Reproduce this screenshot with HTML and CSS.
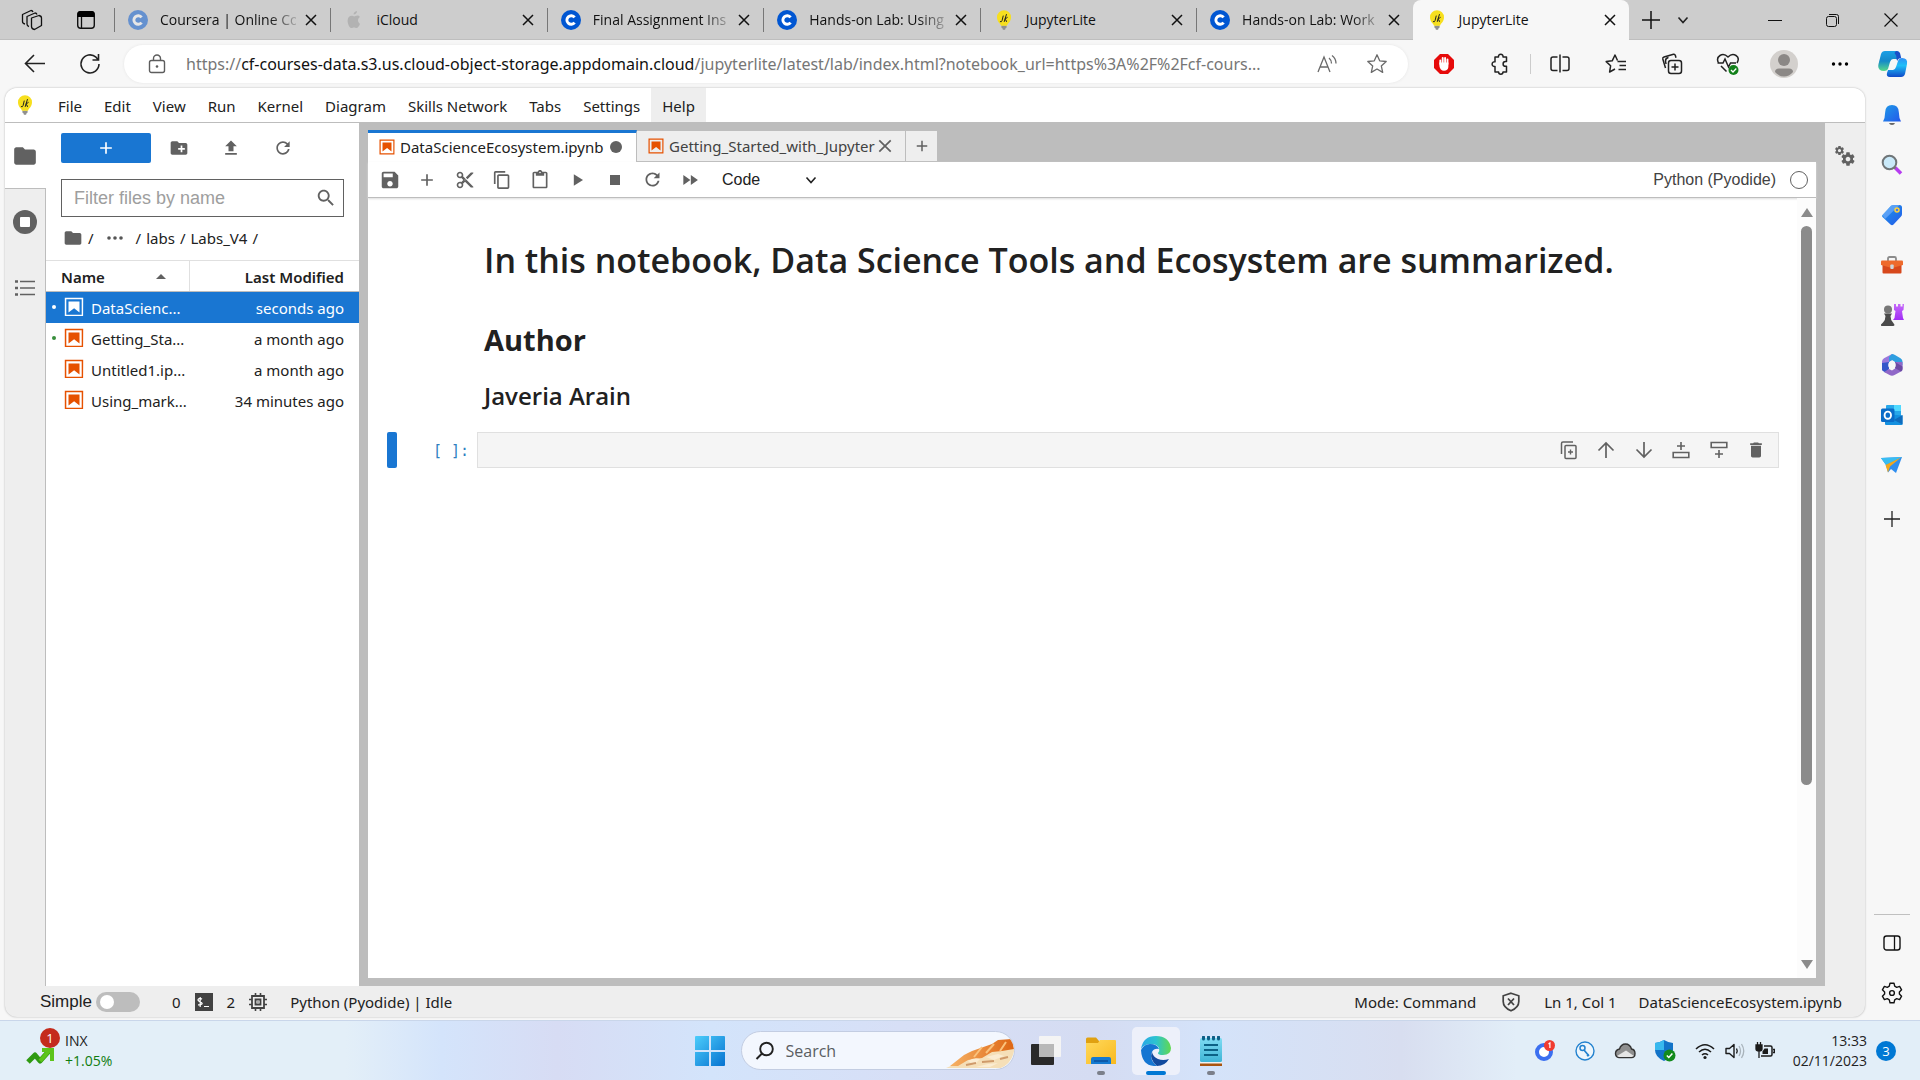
FILE: index.html
```html
<!DOCTYPE html>
<html lang="en">
<head>
<meta charset="utf-8">
<title>JupyterLite</title>
<link rel="stylesheet" href="styles.css">
</head>
<body>
<svg class="defs" aria-hidden="true">
  <defs>
    <linearGradient id="g-blue" x1="0" y1="0" x2="1" y2="1"><stop offset="0" stop-color="#1e9be8"/><stop offset="1" stop-color="#2458ea"/></linearGradient>
    <linearGradient id="g-win" x1="0" y1="0" x2="1" y2="1"><stop offset="0" stop-color="#4ccdfb"/><stop offset="1" stop-color="#0672d0"/></linearGradient>
    <linearGradient id="g-yellow" x1="0" y1="0" x2="1" y2="1"><stop offset="0" stop-color="#ffd95c"/><stop offset="1" stop-color="#f9b91e"/></linearGradient>
    <linearGradient id="g-edge" x1="0" y1="0" x2="1" y2="0"><stop offset="0" stop-color="#2aa6e8"/><stop offset=".5" stop-color="#2cc3d0"/><stop offset="1" stop-color="#62d94e"/></linearGradient>
    <linearGradient id="g-teal" x1="0" y1="0" x2="0" y2="1"><stop offset="0" stop-color="#1aa0e6"/><stop offset=".5" stop-color="#1589c9"/><stop offset="1" stop-color="#57d98a"/></linearGradient>
    <linearGradient id="g-azure" x1="0" y1="0" x2="0" y2="1"><stop offset="0" stop-color="#2f8ff5"/><stop offset=".4" stop-color="#1ec0f8"/><stop offset="1" stop-color="#1049c8"/></linearGradient>
    <linearGradient id="g-purple" x1="0" y1="0" x2="0" y2="1"><stop offset="0" stop-color="#c66bfa"/><stop offset="1" stop-color="#a12df5"/></linearGradient>
    <linearGradient id="g-note" x1="0" y1="0" x2="0" y2="1"><stop offset="0" stop-color="#7fdcf3"/><stop offset="1" stop-color="#3fb4d6"/></linearGradient>
    <linearGradient id="g-crust" x1="0" y1="0" x2="1" y2="0"><stop offset="0" stop-color="#f6b266"/><stop offset="1" stop-color="#dd6513"/></linearGradient>
    <symbol id="i-coursera" viewBox="0 0 20 20"><circle cx="10" cy="10" r="10" fill="#0056d2"/><path d="M13.6 7.4A4.3 4.3 0 1 0 13.6 12.6" fill="none" stroke="#fff" stroke-width="2.9"/></symbol>
    <symbol id="i-bulb" viewBox="0 0 20 20"><path d="M7.4 15.4h5.2v2.2l-1.4 1.2v.9H8.8v-.9l-1.4-1.2z" fill="#8f8f8f"/><path d="M10 .3a7 7 0 0 1 7 7c0 4.500-3 5.700-4 8.500H7C6 13 3 11.800 3 7.300a7 7 0 0 1 7-7z" fill="#f7df1e"/><path d="M9.200 6 8 10.800q-.4 1.500-1.700.9M12.400 4.500 10.300 11.500M13.300 7.500 10.800 9.200q1.300.3 1.700 2.300" fill="none" stroke="#222" stroke-width="1" stroke-linecap="round"/></symbol>
    <symbol id="i-x" viewBox="0 0 14 14"><path d="M2 2l10 10M12 2 2 12" fill="none" stroke="currentColor" stroke-width="1.500"/></symbol>
    <symbol id="i-folder" viewBox="0 0 24 24"><path d="M10 4H4c-1.100 0-1.990.9-1.990 2L2 18c0 1.100.9 2 2 2h16c1.100 0 2-.9 2-2V8c0-1.100-.9-2-2-2h-8l-2-2z" fill="currentColor"/></symbol>
    <symbol id="i-refresh" viewBox="0 0 18 18"><path d="M9 13.500c-2.490 0-4.500-2.010-4.500-4.500S6.510 4.500 9 4.500c1.240 0 2.360.52 3.170 1.330L10 8h5V3l-1.760 1.760C12.150 3.680 10.660 3 9 3 5.690 3 3.010 5.690 3.010 9S5.690 15 9 15c2.970 0 5.430-2.160 5.900-5h-1.520c-.46 2-2.240 3.500-4.380 3.500z" fill="currentColor"/></symbol>
    <symbol id="i-notebook" viewBox="0 0 22 22"><path d="M18.700 3.300v15.400H3.300V3.300h15.400m1.500-1.500H1.800v18.300h18.300l.1-18.300z" fill="currentColor"/><path d="M16.500 16.500l-5.400-4.300-5.600 4.300v-11h11z" fill="currentColor"/></symbol>
    <symbol id="i-add" viewBox="0 0 24 24"><path d="M19 13h-6v6h-2v-6H5v-2h6V5h2v6h6v2z" fill="currentColor"/></symbol>
    <symbol id="i-chev" viewBox="0 0 14 14"><path d="M2.500 4.500 7 9.500l4.500-5" fill="none" stroke="currentColor" stroke-width="1.600"/></symbol>
    <symbol id="i-gear" viewBox="0 0 24 24"><path fill="currentColor" fill-rule="evenodd" d="M19.430 12.980c.04-.32.07-.64.07-.98s-.03-.66-.07-.98l2.110-1.650c.19-.15.24-.42.12-.64l-2-3.460c-.12-.22-.39-.3-.61-.22l-2.490 1c-.52-.4-1.080-.73-1.690-.98l-.38-2.650C14.460 2.180 14.250 2 14 2h-4c-.25 0-.46.18-.49.42l-.38 2.650c-.61.25-1.170.59-1.690.98l-2.490-1c-.23-.09-.49 0-.61.22l-2 3.460c-.13.22-.07.49.12.64l2.110 1.650c-.04.32-.07.65-.07.98s.03.66.07.98l-2.110 1.650c-.19.15-.24.42-.12.64l2 3.460c.12.22.39.3.61.22l2.490-1c.52.4 1.080.73 1.690.98l.38 2.650c.03.24.24.42.49.42h4c.25 0 .46-.18.49-.42l.38-2.650c.61-.25 1.170-.59 1.690-.98l2.490 1c.23.09.49 0 .61-.22l2-3.460c.12-.22.07-.49-.12-.64l-2.110-1.650zM12 15.500c-1.930 0-3.500-1.570-3.500-3.500s1.570-3.500 3.500-3.500 3.500 1.570 3.500 3.500-1.570 3.500-3.500 3.500z"/></symbol>
  </defs>
</svg>

<header class="tabstrip">
  <div class="tab-tools">
    <button aria-label="Workspaces"><svg width="22" height="22" viewBox="0 0 22 22"><g fill="none" stroke="#111" stroke-width="1.300" stroke-linejoin="round"><path d="M10.500 9 18 6.500q2.500.5 2.500 2.500v7.500l-7 4q-3-.5-3-3z"/><path d="M8 17.500q-2-.5-2-2.500V7.500L14 4q1.500 0 2 1.500"/><path d="M4 15q-2.500-.5-2.500-2.500V5.500L10 1.500q1.500 0 2 1.500"/></g></svg></button>
    <button aria-label="Tab actions"><svg width="20" height="20" viewBox="0 0 20 20"><rect x="1.700" y="1.700" width="16.600" height="16.600" rx="3" fill="none" stroke="#111" stroke-width="1.400"/><path d="M1.500 7V4q0-3 3-3h11q3 0 3 3v3z" fill="#000"/><path d="M5.500 7v11" stroke="#111" stroke-width="1.300"/></svg></button>
  </div>
  <nav class="tabs" aria-label="Browser tabs">
    <div class="tab asleep"><svg class="fav"><use href="#i-coursera"/></svg><a href="#" class="fade">Coursera | Online Co</a><button aria-label="Close tab"><svg class="x"><use href="#i-x"/></svg></button></div>
    <div class="tab"><svg class="fav" viewBox="0 0 20 20"><path d="M13 1c.1 2-1.600 3.600-3.400 3.600C9.500 2.700 11 1.200 13 1zM16 13.800c-.9 2.400-2.200 4.300-3.600 4.300-1 0-1.300-.6-2.400-.6s-1.500.6-2.400.6C5.600 18 3.600 14 3.600 10.700c0-3.200 2-5 4-5 1.100 0 1.900.7 2.600.7.700 0 1.700-.8 3.100-.8 1 0 2 .5 2.600 1.400-2.700 1.600-2.300 5.400.1 6.800z" fill="#b2b2b2"/></svg><a href="#">iCloud</a><button aria-label="Close tab"><svg class="x"><use href="#i-x"/></svg></button></div>
    <div class="tab"><svg class="fav"><use href="#i-coursera"/></svg><a href="#" class="fade">Final Assignment Ins</a><button aria-label="Close tab"><svg class="x"><use href="#i-x"/></svg></button></div>
    <div class="tab"><svg class="fav"><use href="#i-coursera"/></svg><a href="#" class="fade">Hands-on Lab: Using</a><button aria-label="Close tab"><svg class="x"><use href="#i-x"/></svg></button></div>
    <div class="tab"><svg class="fav"><use href="#i-bulb"/></svg><a href="#">JupyterLite</a><button aria-label="Close tab"><svg class="x"><use href="#i-x"/></svg></button></div>
    <div class="tab"><svg class="fav"><use href="#i-coursera"/></svg><a href="#" class="fade">Hands-on Lab: Work</a><button aria-label="Close tab"><svg class="x"><use href="#i-x"/></svg></button></div>
    <div class="tab active"><svg class="fav"><use href="#i-bulb"/></svg><a href="#">JupyterLite</a><button aria-label="Close tab"><svg class="x"><use href="#i-x"/></svg></button></div>
  </nav>
  <div class="new-tab">
    <button aria-label="New tab"><svg width="18" height="18" viewBox="0 0 18 18"><path d="M9 0v18M0 9h18" stroke="#111" stroke-width="1.500"/></svg></button>
    <button aria-label="Tab list"><svg width="14" height="14"><use href="#i-chev"/></svg></button>
  </div>
  <div class="win-controls">
    <button aria-label="Minimize"><svg width="14" height="14" viewBox="0 0 14 14"><path d="M0 7.500h14" stroke="#111"/></svg></button>
    <button aria-label="Restore"><svg width="14" height="14" viewBox="0 0 14 14"><path d="M3 1.500h7.500q2 0 2 2V11" fill="none" stroke="#111"/><rect x=".5" y="3.500" width="10" height="10" rx="2" fill="none" stroke="#111"/></svg></button>
    <button aria-label="Close window"><svg width="14" height="14" viewBox="0 0 14 14"><path d="M.5.500l13 13M13.500.500l-13 13" stroke="#111" stroke-width="1.200"/></svg></button>
  </div>
</header>

<div class="toolbar">
  <button class="nav-btn" aria-label="Back"><svg width="22" height="20" viewBox="0 0 22 20"><path d="M10 1 1.500 9.500 10 18M1.500 9.500H21" fill="none" stroke="#222" stroke-width="1.600"/></svg></button>
  <button class="nav-btn" aria-label="Refresh"><svg width="22" height="22" viewBox="0 0 22 22"><path d="M20 11a9 9 0 1 1-3-6.800L19 6.500M19.500 1v6h-6" fill="none" stroke="#222" stroke-width="1.600"/></svg></button>
  <div class="address">
    <svg class="lock" width="18" height="20" viewBox="0 0 18 20"><rect x="1.500" y="6.500" width="15" height="12" rx="2" fill="none" stroke="#5d5d5d" stroke-width="1.400"/><path d="M5.500 6.500V4.500a3.500 3.500 0 0 1 7 0v2" fill="none" stroke="#5d5d5d" stroke-width="1.400"/><circle cx="9" cy="12.500" r="1.300" fill="#5d5d5d"/></svg>
    <div class="url" role="textbox" contenteditable="true" spellcheck="false" aria-label="Address"><span>https://</span>cf-courses-data.s3.us.cloud-object-storage.appdomain.cloud<span>/jupyterlite/latest/lab/index.html?notebook_url=https%3A%2F%2Fcf-cours...</span></div>
    <button class="aloud" aria-label="Read aloud"><svg width="22" height="20" viewBox="0 0 22 20"><path d="M2 18 8 3l6 15M4.200 13h7.600M13 4q2.500 2 2.500 5.500M16 1.500q4 3 4 8" fill="none" stroke="#6a6a6a" stroke-width="1.300"/></svg></button>
    <button aria-label="Add to favorites"><svg width="22" height="22" viewBox="0 0 22 22"><path d="M11 1.800l2.700 6 6.500.7-4.900 4.400 1.400 6.500L11 16l-5.700 3.400 1.400-6.500L1.800 8.500l6.500-.7z" fill="none" stroke="#6a6a6a" stroke-width="1.300" stroke-linejoin="round"/></svg></button>
  </div>
  <div class="extensions">
    <button aria-label="Ad blocker"><svg width="20" height="20" viewBox="0 0 20 20"><path d="M6 0h8l6 6v8l-6 6H6l-6-6V6z" fill="#e60a0a"/><path d="M6.300 10V6.500M8.700 9V4M11.100 9V4M13.500 10V5.500" stroke="#fff" stroke-width="1.900" stroke-linecap="round"/><path d="M5.400 8.500h9V13q-.5 3.800-4.400 3.800T5.400 12z" fill="#fff"/></svg></button>
    <button aria-label="Extensions"><svg width="22" height="22" viewBox="0 0 22 22"><path d="M6 4h3.500a2.300 2.300 0 1 1 4.500 0h3.500v4.500h-1a2.300 2.300 0 0 0 0 4.800h1V19H14a2.200 2.200 0 0 1-4.400 0H6v-5.500a2.400 2.400 0 1 1 0-4.700z" fill="none" stroke="#222" stroke-width="1.500" stroke-linejoin="round"/></svg></button>
    <i class="divider"></i>
    <button aria-label="Split screen"><svg width="22" height="22" viewBox="0 0 22 22"><path d="M8.500 4H4Q2 4 2 6v9.500q0 2 2 2h4.500M13.500 4H18q2 0 2 2v9.500q0 2-2 2h-4.500M11 1.500v18" fill="none" stroke="#222" stroke-width="1.500"/></svg></button>
    <button aria-label="Favorites"><svg width="22" height="22" viewBox="0 0 22 22"><path d="M12.500 7.500 10 2 7.200 7.800l-6 .8 4.400 4.200-1 6.200 5.400-3M12.500 8.500H21M14.500 12.500H21M13.500 16.500H21" fill="none" stroke="#222" stroke-width="1.500" stroke-linejoin="round"/></svg></button>
    <button aria-label="Collections"><svg width="22" height="22" viewBox="0 0 22 22"><rect x="7.500" y="7.500" width="13" height="13" rx="2.500" fill="none" stroke="#222" stroke-width="1.500"/><path d="M14 10.500v7M10.500 14h7M4.500 15 1.800 6Q1.500 4.500 3 4l9.500-2.700q1.300-.3 1.800 1l.7 2.400M5 11l-.5-3q0-3 3-3.500" fill="none" stroke="#222" stroke-width="1.500"/></svg></button>
    <button aria-label="Browser essentials"><svg width="24" height="24" viewBox="0 0 24 24"><path d="M2.500 11Q0 6 4 3.500t8 1.500q4-4 8-1.500T21 11M1.500 11H7l2-4 3.500 8 2-4H20M5 14l5.500 5.500" fill="none" stroke="#222" stroke-width="1.500"/><circle cx="17.500" cy="18" r="5" fill="#12801a"/><path d="M15 18l2 2 3.300-3.500" fill="none" stroke="#fff" stroke-width="1.300"/></svg></button>
    <button aria-label="Profile"><svg width="28" height="28" viewBox="0 0 28 28"><circle cx="14" cy="14" r="14" fill="#d3d0cd"/><circle cx="14" cy="10" r="6" fill="#8b8886"/><path d="M5 22q0-3.500 4-3.500h10q4 0 4 3.500-4 4.500-9 4.500T5 22z" fill="#8b8886"/></svg></button>
    <button aria-label="Settings and more"><svg width="18" height="6" viewBox="0 0 18 6"><circle cx="2.500" cy="3" r="1.700"/><circle cx="9" cy="3" r="1.700"/><circle cx="15.500" cy="3" r="1.700"/></svg></button>
  </div>
  <button class="copilot" aria-label="Copilot"><svg width="30" height="28" viewBox="0 0 30 28"><path d="M7 1h11q4 0 3.500 4L20 9h-5q-2 0-3 3l-2 7q-1 2-4 2Q-1 21 .500 14L3 4q1-3 4-3z" fill="url(#g-teal)"/><path d="M23 27H12q-4 0-3-4l1-3h5q2 0 3-3l2-6q1-3 4-3 6 0 5 6L27 24q-1 3-4 3z" fill="url(#g-azure)"/><path d="M18 1q4 0 4.500 4l.7 3q-3 0-4 3l-.7-2q0-4-2-6z" fill="#1b50c8"/></svg></button>
</div>

<div class="middle">
  <main class="page">
    <nav class="menubar" aria-label="Main menu">
      <svg class="logo" width="20" height="22"><use href="#i-bulb"/></svg>
      <button>File</button><button>Edit</button><button>View</button><button>Run</button><button>Kernel</button><button>Diagram</button><button>Skills Network</button><button>Tabs</button><button>Settings</button><button class="hover">Help</button>
    </nav>
    <div class="lab">
      <nav class="rail left" aria-label="Side panels">
        <button class="current" aria-label="File Browser"><svg width="26" height="26"><use href="#i-folder"/></svg></button>
        <button aria-label="Running Terminals and Kernels"><svg width="24" height="24" viewBox="0 0 24 24"><circle cx="12" cy="12" r="12" fill="currentColor"/><rect x="7" y="7" width="10" height="10" rx="1" fill="#fff"/></svg></button>
        <button aria-label="Table of Contents"><svg width="20" height="16" viewBox="0 0 20 16"><path d="M5 1.500h15M5 8h15M5 14.500h15" stroke="currentColor" stroke-width="1.600"/><path d="M0 1.500h3M0 8h3M0 14.500h3" stroke="currentColor" stroke-width="2.600"/></svg></button>
      </nav>

      <section class="files" aria-label="File browser">
        <div class="file-actions">
          <button class="launcher" aria-label="New Launcher"><svg width="20" height="20"><use href="#i-add"/></svg></button>
          <button aria-label="New Folder"><svg width="20" height="20" viewBox="0 0 24 24"><path fill="currentColor" d="M20 6h-8l-2-2H4c-1.110 0-1.990.89-1.990 2L2 18c0 1.110.89 2 2 2h16c1.110 0 2-.89 2-2V8c0-1.110-.89-2-2-2zm-1 8h-3v3h-2v-3h-3v-2h3V9h2v3h3v2z"/></svg></button>
          <button aria-label="Upload Files"><svg width="20" height="20" viewBox="0 0 24 24"><path fill="currentColor" d="M9 16h6v-6h4l-7-7-7 7h4zm-4 2h14v2H5z"/></svg></button>
          <button aria-label="Refresh File List"><svg width="20" height="20"><use href="#i-refresh"/></svg></button>
        </div>
        <label class="filter"><input type="text" placeholder="Filter files by name" aria-label="Filter files by name"><svg width="22" height="22" viewBox="0 0 24 24"><path fill="currentColor" d="M15.500 14h-.79l-.28-.27C15.410 12.590 16 11.110 16 9.500 16 5.910 13.090 3 9.500 3S3 5.910 3 9.500 5.910 16 9.500 16c1.610 0 3.090-.59 4.230-1.570l.27.28v.79l5 4.990L20.490 19l-4.990-5zm-6 0C7.010 14 5 11.990 5 9.500S7.010 5 9.500 5 14 7.010 14 9.500 11.990 14 9.500 14z"/></svg></label>
        <nav class="crumbs" aria-label="Path"><a href="#" aria-label="Root"><svg width="20" height="20"><use href="#i-folder"/></svg></a><span>/</span><a href="#" class="dots" aria-label="Hidden folders"><svg width="16" height="4" viewBox="0 0 16 4"><circle cx="2" cy="2" r="1.800" fill="#555"/><circle cx="8" cy="2" r="1.800" fill="#555"/><circle cx="14" cy="2" r="1.800" fill="#555"/></svg></a><span>/</span><a href="#">labs</a><span>/</span><a href="#">Labs_V4</a><span>/</span></nav>
        <table class="listing">
          <thead><tr><th scope="col"><div class="sort">Name<svg width="10" height="5" viewBox="0 0 10 5"><path d="M0 5l5-5 5 5z" fill="#616161"/></svg></div></th><th scope="col">Last Modified</th></tr></thead>
          <tbody>
            <tr class="selected"><td><div class="file running"><svg width="22" height="22"><use href="#i-notebook"/></svg><a href="#">DataScienc...</a></div></td><td>seconds ago</td></tr>
            <tr><td><div class="file running"><svg width="22" height="22"><use href="#i-notebook"/></svg><a href="#">Getting_Sta...</a></div></td><td>a month ago</td></tr>
            <tr><td><div class="file"><svg width="22" height="22"><use href="#i-notebook"/></svg><a href="#">Untitled1.ip...</a></div></td><td>a month ago</td></tr>
            <tr><td><div class="file"><svg width="22" height="22"><use href="#i-notebook"/></svg><a href="#">Using_mark...</a></div></td><td>34 minutes ago</td></tr>
          </tbody>
        </table>
      </section>

      <section class="dock">
        <div class="doc-tabs">
          <div class="doc-tab current"><svg width="18" height="18"><use href="#i-notebook"/></svg><a href="#">DataScienceEcosystem.ipynb</a><i class="dirty"></i></div>
          <div class="doc-tab"><svg width="18" height="18"><use href="#i-notebook"/></svg><a href="#">Getting_Started_with_Jupyter</a><button aria-label="Close"><svg width="16" height="16"><use href="#i-x"/></svg></button></div>
          <button class="doc-add" aria-label="New Launcher"><svg width="18" height="18"><use href="#i-add"/></svg></button>
        </div>
        <div class="notebook">
          <div class="nb-toolbar">
            <div class="nb-actions">
              <button aria-label="Save"><svg width="22" height="22" viewBox="0 0 24 24"><path fill="currentColor" d="M17 3H5c-1.110 0-2 .9-2 2v14c0 1.100.89 2 2 2h14c1.100 0 2-.9 2-2V7l-4-4zm-5 16c-1.660 0-3-1.340-3-3s1.340-3 3-3 3 1.340 3 3-1.340 3-3 3zm3-10H5V5h10v4z"/></svg></button>
              <button aria-label="Insert cell"><svg width="20" height="20"><use href="#i-add"/></svg></button>
              <button aria-label="Cut"><svg width="20" height="20" viewBox="0 0 24 24"><path fill="currentColor" d="M9.640 7.640c.23-.5.36-1.050.36-1.640 0-2.210-1.790-4-4-4S2 3.790 2 6s1.790 4 4 4c.59 0 1.140-.13 1.640-.36L10 12l-2.360 2.360C7.140 14.130 6.590 14 6 14c-2.210 0-4 1.790-4 4s1.790 4 4 4 4-1.790 4-4c0-.59-.13-1.140-.36-1.640L12 14l7 7h3v-1L9.640 7.640zM6 8c-1.100 0-2-.89-2-2s.9-2 2-2 2 .89 2 2-.9 2-2 2zm0 12c-1.100 0-2-.89-2-2s.9-2 2-2 2 .89 2 2-.9 2-2 2zm6-7.500c-.28 0-.5-.22-.5-.5s.22-.5.5-.5.5.22.5.5-.22.5-.5.5zM19 3l-6 6 2 2 7-7V3z"/></svg></button>
              <button aria-label="Copy"><svg width="20" height="20" viewBox="0 0 18 18"><path fill="currentColor" d="M11.900 1H3.200C2.400 1 1.700 1.700 1.700 2.500v10.200h1.500V2.500h8.700V1zM14.100 3.900h-8c-.8 0-1.500.7-1.500 1.500v10.200c0 .8.7 1.500 1.500 1.500h8c.8 0 1.500-.7 1.500-1.500V5.400c-.1-.8-.7-1.500-1.500-1.500zM14.100 15.500h-8V5.400h8v10.100z"/></svg></button>
              <button aria-label="Paste"><svg width="20" height="20" viewBox="0 0 24 24"><path fill="currentColor" d="M19 2h-4.180C14.400.84 13.300 0 12 0c-1.300 0-2.400.84-2.820 2H5c-1.100 0-2 .9-2 2v16c0 1.100.9 2 2 2h14c1.100 0 2-.9 2-2V4c0-1.100-.9-2-2-2zm-7 0c.55 0 1 .45 1 1s-.45 1-1 1-1-.45-1-1 .45-1 1-1zm7 18H5V4h2v3h10V4h2v16z"/></svg></button>
              <button aria-label="Run"><svg width="20" height="20" viewBox="0 0 24 24"><path fill="currentColor" d="M7 5v14l11-7z"/></svg></button>
              <button aria-label="Interrupt"><svg width="20" height="20" viewBox="0 0 24 24"><path fill="currentColor" d="M6 6h12v12H6z"/></svg></button>
              <button aria-label="Restart"><svg width="21" height="21"><use href="#i-refresh"/></svg></button>
              <button aria-label="Restart and run all"><svg width="20" height="20" viewBox="0 0 24 24"><path fill="currentColor" d="M4 18l8.500-6L4 6v12zm9-12v12l8.500-6L13 6z"/></svg></button>
            </div>
            <label class="cell-type"><select aria-label="Cell type"><option>Code</option><option>Markdown</option><option>Raw</option></select><svg width="14" height="14"><use href="#i-chev"/></svg></label>
            <button class="kernel">Python (Pyodide)</button>
            <i class="kernel-status"></i>
          </div>
          <div class="nb-body">
            <div class="cells">
              <article class="markdown">
                <h1>In this notebook, Data Science Tools and Ecosystem are summarized.</h1>
                <h2>Author</h2>
                <h3>Javeria Arain</h3>
              </article>
              <div class="cell">
                <i class="collapser"></i>
                <span class="prompt">[ ]:</span>
                <div class="editor">
                  <textarea rows="1" aria-label="Code cell"></textarea>
                  <div class="cell-tools">
                    <button aria-label="Duplicate cell"><svg width="20" height="20" viewBox="0 0 20 20"><path d="M2.500 14V3.500q0-1.500 1.500-1.500h10" fill="none" stroke="currentColor" stroke-width="1.500"/><rect x="6" y="5.500" width="11" height="13" rx="1" fill="none" stroke="currentColor" stroke-width="1.500"/><path d="M11.500 9.500v5M9 12h5" stroke="currentColor" stroke-width="1.400"/></svg></button>
                    <button aria-label="Move up"><svg width="18" height="18" viewBox="0 0 18 18"><path d="M9 17V2M1.500 9.500 9 2l7.500 7.500" fill="none" stroke="currentColor" stroke-width="1.700"/></svg></button>
                    <button aria-label="Move down"><svg width="18" height="18" viewBox="0 0 18 18"><path d="M9 1v15M1.500 8.500 9 16l7.500-7.500" fill="none" stroke="currentColor" stroke-width="1.700"/></svg></button>
                    <button aria-label="Insert above"><svg width="18" height="18" viewBox="0 0 18 18"><path d="M9 1v8M5 5h8M1.200 11.500h15.600v5H1.200z" fill="none" stroke="currentColor" stroke-width="1.600"/></svg></button>
                    <button aria-label="Insert below"><svg width="18" height="18" viewBox="0 0 18 18"><path d="M9 9v8M5 13h8M1.200 1.500h15.600v5H1.200z" fill="none" stroke="currentColor" stroke-width="1.600"/></svg></button>
                    <button aria-label="Delete cell"><svg width="20" height="20" viewBox="0 0 24 24"><path fill="currentColor" d="M6 19c0 1.100.9 2 2 2h8c1.100 0 2-.9 2-2V7H6v12zM19 4h-3.500l-1-1h-5l-1 1H5v2h14V4z"/></svg></button>
                  </div>
                </div>
              </div>
            </div>
            <div class="scrollbar" aria-hidden="true"><i class="up"></i><div class="track"><i class="thumb"></i></div><i class="down"></i></div>
          </div>
        </div>
      </section>

      <nav class="rail right" aria-label="Inspector">
        <button aria-label="Property Inspector"><svg width="22" height="22" viewBox="0 0 22 22"><svg x="0" y="0" width="11" height="11"><use href="#i-gear"/></svg><svg x="6" y="6" width="16" height="16"><use href="#i-gear"/></svg></svg></button>
      </nav>
    </div>
    <footer class="status">
      <label class="simple">Simple<input type="checkbox" role="switch"></label>
      <div class="counts"><span>0</span><svg width="18" height="18" viewBox="0 0 18 18"><rect width="18" height="18" fill="#424242"/><path d="M7 6.200Q5 4.600 3.500 6t1.500 2.800 1.800 2.300T3 11.800M5.200 4v10M9 13.500h5" fill="none" stroke="#fff" stroke-width="1.200"/></svg><span>2</span><svg width="18" height="18" viewBox="0 0 18 18"><path d="M3 3h12v12H3zM6.500 6.500h5v5h-5z" fill="none" stroke="#424242" stroke-width="1.800"/><path d="M6.500 0v3M11.500 0v3M6.500 15v3M11.500 15v3M0 6.500h3M0 11.500h3M15 6.500h3M15 11.500h3M8.500 9h1" stroke="#424242" stroke-width="1.600"/></svg></div>
      <span>Python (Pyodide) | Idle</span>
      <span class="mode">Mode: Command</span>
      <svg class="shield" width="20" height="20" viewBox="0 0 20 20"><path d="M10 1.200l7.800 2.600v5.700q0 6-7.800 9.300Q2.200 15.500 2.200 9.500V3.800z" fill="none" stroke="#424242" stroke-width="1.700"/><path d="M7 6.500l6 6.500M13 6.500 7 13" stroke="#424242" stroke-width="1.800"/></svg>
      <span class="pos">Ln 1, Col 1</span>
      <span>DataScienceEcosystem.ipynb</span>
    </footer>
  </main>

  <aside class="sidebar" aria-label="Edge sidebar">
    <button aria-label="Notifications"><svg width="22" height="22" viewBox="0 0 22 22"><path d="M8 19h6q-.5 2-3 2t-3-2z" fill="#666"/><path d="M11 1q6.500 0 6.800 7l.7 6 1.500 3.500H2L3.500 14l.7-6Q4.500 1 11 1z" fill="url(#g-blue)"/></svg></button>
    <button aria-label="Search"><svg width="22" height="22" viewBox="0 0 22 22"><path d="M14 13.500l6 6" stroke="#b63cf0" stroke-width="3.600"/><path d="M12.500 12.500l2 2" stroke="#777" stroke-width="2"/><circle cx="8.500" cy="8.500" r="6.800" fill="#c9e9f9" stroke="#6f7578" stroke-width="2"/></svg></button>
    <button aria-label="Shopping"><svg width="22" height="22" viewBox="0 0 22 22"><path d="M1.500 11 10 1.800Q11 1 12.500 1h6Q21 1 21 3.500V10q0 1.500-1 2.500l-7.500 8Q11 22 9.500 20.500l-8-7.500q-1-1 0-2z" fill="url(#g-blue)"/><path d="M1.500 11 10 1.800Q11 1 12.500 1h6L4 15z" fill="#7fb3ff" opacity=".6"/><circle cx="16" cy="6" r="2" fill="#4d78e8" stroke="#ffd23b" stroke-width="1.500"/></svg></button>
    <button aria-label="Tools"><svg width="22" height="22" viewBox="0 0 22 22"><path d="M7 7V4.500q0-1.500 1.500-1.500h5Q15 3 15 4.500V7" fill="none" stroke="#8b8b8b" stroke-width="1.800"/><path d="M1.500 10h19v8.500q0 1-1 1h-17q-1 0-1-1z" fill="#d7481c"/><path d="M1 6.500h20q1 0 1 1V11L13 13.500H9L0 11V7.500q0-1 1-1z" fill="#ee6a2c"/><rect x="9.300" y="10.500" width="3.400" height="4.500" rx="1" fill="#cfd6da"/></svg></button>
    <button aria-label="Games"><svg width="24" height="24" viewBox="0 0 24 24"><path d="M14 1h2v2.500h2V1h2.500v2.500h2V1H24l-.5 6-1.500 1 1 7 1 2H13l1.500-2 1-7-1.500-1z" fill="url(#g-purple)"/><circle cx="8" cy="6.500" r="4" fill="#777"/><path d="M4 10.500h8l-1.500 2.500q0 4 2.500 6.500l1.500 2.200q0 1.300-1.500 1.300H2Q.500 23 1 21.500l2-2Q5.500 17 5.500 13z" fill="#4a4a4a"/></svg></button>
    <button aria-label="Microsoft 365"><svg width="22" height="22" viewBox="0 0 22 22"><path d="M11 0 3 4.300Q1 5.500 1 7.500v7q0 2 1 2.500l6-3V8l6-4z" fill="#9a78dc"/><path d="M1 9v6.500q0 1 2 2.300l1.500.7L8 15V8z" fill="#3457c9"/><path d="M11 0q1.500 0 3 1l5.500 3.300q2 1.200 2 3.200v4L14 8l-3-2-3 2V3z" fill="#2f9ee0"/><path d="M21.500 8v7q0 1.500-1.500 2.500L13.500 21q-2.500 1.500-5 0L3 18l5-3 3 1.500 3-2V8z" fill="#9068c8"/><path d="M14 8l7.500 4.500V15q0 1.500-1.500 2.500L14 14z" fill="#6c4ba4"/><circle cx="11" cy="11" r="3.800" fill="#f7f7f7"/></svg></button>
    <button aria-label="Outlook"><svg width="22" height="22" viewBox="0 0 22 22"><path d="M6 1h13q1 0 1 1v10H5V2q0-1 1-1z" fill="#28a8ea"/><path d="M13 1h7v6h-7z" fill="#50d9ff"/><path d="M4 10l17.500 1.500V20q0 1-1 1H5q-1 0-1-1z" fill="#1490df"/><path d="M13 16l8.500-5v9.500z" fill="#0f6cbd"/><rect x="0" y="4.500" width="13.500" height="13.500" rx="1.500" fill="#0a6cc8"/><ellipse cx="6.800" cy="11.200" rx="3.200" ry="3.600" fill="none" stroke="#fff" stroke-width="1.900"/></svg></button>
    <button aria-label="Drop"><svg width="22" height="22" viewBox="0 0 22 22"><path d="M0 4 21 3l-6 16-5-4-3 3.500-2-7.500z" fill="#2f8ef0"/><path d="M0 4 21 3 5 11z" fill="#39bdf2"/><path d="M20 3.500 4.500 11 7 18.500l2-6z" fill="#f3a81c"/></svg></button>
    <button class="add" aria-label="Customize"><svg width="18" height="18" viewBox="0 0 18 18"><path d="M9 1v16M1 9h16" stroke="#222" stroke-width="1.300"/></svg></button>
    <i class="rule"></i>
    <button aria-label="Hide sidebar"><svg width="18" height="18" viewBox="0 0 18 18"><rect x="1" y="2" width="16" height="14" rx="2.500" fill="none" stroke="#111" stroke-width="1.400"/><path d="M11.500 2v14" stroke="#111" stroke-width="1.300"/></svg></button>
    <button aria-label="Sidebar settings"><svg width="22" height="22" viewBox="0 0 22 22"><path d="M9 1.200h4l.7 3 2 1.100 2.900-.9 2 3.400-2.200 2.100v2.200l2.200 2.100-2 3.400-2.900-.9-2 1.100-.7 3H9l-.7-3-2-1.100-2.900.9-2-3.400 2.200-2.100V9.900L1.400 7.800l2-3.400 2.900.9 2-1.100z" fill="none" stroke="#111" stroke-width="1.400" stroke-linejoin="round"/><circle cx="11" cy="11" r="2.400" fill="none" stroke="#111" stroke-width="1.400"/></svg></button>
  </aside>
</div>

<footer class="taskbar">
  <button class="widget">
    <span class="stock"><svg width="30" height="20" viewBox="0 0 30 20"><path d="M2 16 9 9l5 6 9-10" fill="none" stroke="#2f9a12" stroke-width="5" stroke-linejoin="round"/><path d="M14 15l9-10M16 4h10v11" fill="none" stroke="#5dc41a" stroke-width="4"/></svg><b>1</b></span>
    <span class="quote">INX<em>+1.05%</em></span>
  </button>
  <div class="apps">
    <button class="app" aria-label="Start"><svg width="30" height="30" viewBox="0 0 30 30"><path d="M1 0h13v14H0V1q0-1 1-1zM16 0h13q1 0 1 1v13H16zM0 16h14v14H1q-1 0-1-1zM16 16h14v13q0 1-1 1H16z" fill="url(#g-win)"/></svg></button>
    <label class="search"><svg width="20" height="20" viewBox="0 0 20 20"><circle cx="11.500" cy="8" r="6.300" fill="none" stroke="#222" stroke-width="1.900"/><path d="M7 12.500 1.500 18" stroke="#222" stroke-width="2"/></svg><input type="search" placeholder="Search" aria-label="Search"><svg class="pastry" width="68" height="30" viewBox="0 0 68 30"><path d="M0 29 12 24 22 14l12-3L50 4l16-4q4 8 1 16-3 9-12 13z" fill="#f5dfb8"/><path d="M18 16l8-4 20-7 6-4 14-1 2 10-12 2-10 1-10 6-14 2-10 6-8 0z" fill="url(#g-crust)"/><path d="M22 22q6-4 12-2l-6 6zM40 18l12-3 6 2-10 4zM30 28l12-3 10-1-8 4z" fill="#fbecd2"/><path d="M28 18 36 8M40 14l8-9M54 12l6-9" stroke="#fac27c" stroke-width="2"/><path d="M20 26l10-2M36 23l12-1M54 20l8-2" stroke="#cf9a6a" stroke-width="2"/></svg></label>
    <button class="app" aria-label="Task view"><svg width="30" height="30" viewBox="0 0 30 30"><rect x="0" y="8" width="23" height="21" rx="1" fill="#2a2a2a"/><rect x="8" y="0" width="22" height="21" rx="1" fill="#f4f4f4"/><path d="M8 8h15v13H8z" fill="#b9b9b9"/></svg></button>
    <button class="app open" aria-label="File Explorer"><svg width="30" height="28" viewBox="0 0 30 28"><path d="M0 2q0-1.500 1.500-1.500H10L13 4h0v5H0z" fill="#e0a111"/><path d="M0 6h12l2-3h15q1 0 1 1v23H0z" fill="url(#g-yellow)"/><path d="M5 27v-5q0-2 2-2h16q2 0 2 2v5z" fill="#1479d0"/><path d="M8 24h14" stroke="#0a4f9c" stroke-width="1.500"/></svg></button>
    <button class="app open active" aria-label="Microsoft Edge"><svg width="30" height="30" viewBox="0 0 30 30"><path d="M0 13Q2 0 15 0t15 12q0 7-8 7-5 0-5-2 2-2 1-5-2-4-8-4-7 0-10 5z" fill="url(#g-edge)"/><path d="M0 14Q3 8 9 8q7 0 9 5-5-1-7 3-3 8 5 14Q1 31 0 14z" fill="#1576d2"/><path d="M11 16q-3 7 5 14 8 0 12-7-6 2-11 0-5-2-6-7z" fill="#114a9e"/></svg></button>
    <button class="app open" aria-label="Notepad"><svg width="24" height="30" viewBox="0 0 24 30"><path d="M1 26h22v4H1z" fill="#a9540f"/><path d="M1 25h22v2.500H1z" fill="#f0f0f0"/><rect x="1" y="2" width="22" height="24" rx="1.500" fill="url(#g-note)"/><path d="M4.500 1v2M9.500 1v2M14.500 1v2M19.500 1v2" stroke="#0d5f86" stroke-width="3" stroke-linecap="round"/><path d="M5 9h14M5 14h14M5 19h14" stroke="#0c6286" stroke-width="2"/></svg></button>
  </div>
  <div class="tray">
    <button aria-label="Signal"><svg width="22" height="22" viewBox="0 0 22 22"><circle cx="10" cy="12" r="7" fill="#fff" stroke="#3b6ff0" stroke-width="4"/><circle cx="15.500" cy="5.500" r="5.500" fill="#f03b30"/><path d="M14.500 4l1.400-1v5" fill="none" stroke="#fff" stroke-width="1.200"/></svg></button>
    <button aria-label="Passwords"><svg width="20" height="20" viewBox="0 0 20 20"><circle cx="10" cy="10" r="9" fill="#eef6fc" stroke="#2382cf" stroke-width="1.400"/><circle cx="7.500" cy="7" r="2.500" fill="none" stroke="#2382cf" stroke-width="1.500"/><path d="M9 9l5 6M12 15l2-1.500" stroke="#2382cf" stroke-width="1.700"/></svg></button>
    <button aria-label="OneDrive"><svg width="22" height="18" viewBox="0 0 22 18"><path d="M5 15.500Q1.500 15 1.500 11.500T5.500 7Q7 2 11.500 2t6 5q3.500.5 3.500 4.500t-3.500 4z" fill="#8f8f8f" stroke="#333" stroke-width="1.400"/><path d="M3 14 12 8.500l8 5.500-2.500 1H5z" fill="#e5e5e5"/></svg></button>
    <button aria-label="Windows Security"><svg width="22" height="22" viewBox="0 0 22 22"><path d="M10 0q5 3 9 3v7q0 7-9 11Q1 17 1 10V3q4 0 9-3z" fill="#1273c8"/><path d="M10 0v10H1V3q4 0 9-3z" fill="#38b8ee"/><circle cx="15.500" cy="15.500" r="6" fill="#128a1c"/><path d="M12.800 15.500l2 2 3.600-4" fill="none" stroke="#fff" stroke-width="1.500"/></svg></button>
    <button class="quick" aria-label="Network, volume and battery">
      <svg width="20" height="18" viewBox="0 0 20 18"><path d="M1 7q9-8.500 18 0M4 10q6-5.500 12 0M7 13q3-2.500 6 0" fill="none" stroke="#1b1b1b" stroke-width="1.600"/><circle cx="10" cy="15.500" r="1.600" fill="#1b1b1b"/></svg>
      <svg width="20" height="18" viewBox="0 0 20 18"><path d="M1 6.500h3.500L9 2.500v13l-4.500-4H1z" fill="none" stroke="#1b1b1b" stroke-width="1.400" stroke-linejoin="round"/><path d="M11.500 6.500q1.500 2.500 0 5" fill="none" stroke="#1b1b1b" stroke-width="1.400"/><path d="M14 4q3 5 0 10M16.500 2q4.500 7 0 14" fill="none" stroke="#a9b3bb" stroke-width="1.300"/></svg>
      <svg width="20" height="18" viewBox="0 0 20 18"><path d="M1 3h6v4q0 2-3 2T1 7zM2.500 0v3M5.500 0v3M4 9v7" fill="#1b1b1b" stroke="#1b1b1b" stroke-width="1.300"/><path d="M9 4h6.500q1.500 0 1.500 1.500v7q0 1.500-1.500 1.500H6M18 7.500h1.500v3H18" fill="none" stroke="#1b1b1b" stroke-width="1.500"/><path d="M9.500 6.500H13v5.500H7.500V9.500z" fill="#1b1b1b"/></svg>
    </button>
    <button class="clock"><time>13:33</time><time>02/11/2023</time></button>
    <button class="notif" aria-label="3 notifications">3</button>
  </div>
</footer>
</body>
</html>
```
FILE: styles.css
```css
:root {
  --ui: "Open Sans", "Noto Sans", sans-serif;
  --lab: "Noto Sans", "Open Sans", sans-serif;
  --arial: "Liberation Sans", Arial, sans-serif;
  --icon: #616161;
  --line: #bdbdbd;
  --brand: #1976d2;
}
* { box-sizing: border-box; }
html, body { height: 100%; }
body {
  margin: 0;
  display: flex;
  flex-direction: column;
  overflow: hidden;
  background: #f7f7f7;
  color: #212121;
  font: 15px/20px var(--ui);
}
button {
  margin: 0; padding: 0; border: 0;
  background: none;
  color: inherit;
  font: inherit;
  display: flex;
  align-items: center;
  justify-content: center;
}
a { color: inherit; text-decoration: none; }
svg { flex: none; display: block; }
i { display: block; }
.defs { position: absolute; width: 0; height: 0; }

/* browser tab strip */
.tabstrip { display: flex; flex: none; height: 40px; background: #cdcdcd; box-shadow: inset 0 -1px #bebebe; }
.tab-tools { display: flex; align-items: center; width: 114px; padding-left: 5px; }
.tab-tools button { width: 54px; height: 40px; }
.tabs { display: flex; flex: 0 1 1515px; min-width: 0; }
.tab { flex: 1 1 0; min-width: 0; display: flex; align-items: center; gap: 12px; padding: 0 8px 0 14px; position: relative; font-size: 14px; color: #111; }
.tab::before { content: ""; position: absolute; left: 0; top: 8px; width: 1px; height: 24px; background: #777; }
.tab a { flex: 1; min-width: 0; white-space: nowrap; }
.tab .fade { mask-image: linear-gradient(to right, #000 80%, rgb(0 0 0 / .2)); }
.tab button { width: 22px; height: 22px; margin-left: -8px; }
.fav { width: 20px; height: 20px; }
.asleep .fav { opacity: .5; }
.x { width: 14px; height: 14px; }
.tab.active { background: #f7f7f7; border-radius: 8px 8px 0 0; }
.tab.active::before { display: none; }
.new-tab { display: flex; align-items: center; padding-left: 6px; }
.new-tab button { width: 32px; height: 40px; }
.win-controls { display: flex; margin-left: auto; }
.win-controls button { width: 58px; height: 40px; }

/* address toolbar */
.toolbar { display: flex; flex: none; align-items: center; height: 48px; padding: 0 12px 0 7px; }
.nav-btn { width: 55px; height: 40px; }
.address { flex: 1; min-width: 0; display: flex; align-items: center; height: 38px; margin-left: 7px; padding: 0 18px 0 24px; background: #fff; border-radius: 19px; box-shadow: 0 0 3px #e4e4e4; }
.url { flex: 1; min-width: 0; margin-left: 20px; white-space: nowrap; font: 16px/24px var(--lab); color: #111; outline: 0; }
.url span { color: #767676; }
.address button { width: 26px; height: 32px; margin-left: 24px; }
.address .aloud { margin-left: 0; }
.extensions { display: flex; align-items: center; padding-left: 8px; }
.extensions button { width: 56px; height: 40px; }
.divider { width: 1px; height: 20px; background: #ccc; margin: 0 1px 0 2px; }
.copilot { width: 30px; height: 40px; margin-left: 10px; }

.middle { flex: 1; min-height: 0; display: flex; }
.page { flex: 1; min-width: 0; display: flex; flex-direction: column; margin: 0 0 3px 5px; background: #eee; border-radius: 12px; overflow: hidden; box-shadow: 0 0 2px #aaa; font-family: var(--lab); }

/* lab menu */
.menubar { display: flex; flex: none; height: 35px; background: #fff; border-bottom: 1px solid var(--line); padding-left: 10px; }
.menubar button { padding: 1px 11px 0; }
.menubar .hover { background: #eee; }
.logo { align-self: center; margin-right: 12px; }

.lab { flex: 1; min-height: 0; display: flex; }
.rail { flex: none; width: 41px; display: flex; flex-direction: column; color: var(--icon); }
.rail button { width: 100%; height: 66px; }
.rail.left { border-right: 1px solid var(--line); }
.rail.left .current { background: #fff; border-bottom: 1px solid var(--line); width: 41px; padding-right: 2px; }
.rail.right { width: 40px; }

/* file browser */
.files { flex: none; width: 313px; background: #fff; }
.file-actions { display: flex; align-items: center; padding: 10px 15px 0; color: var(--icon); }
.file-actions button { width: 52px; height: 30px; }
.file-actions .launcher { width: 90px; margin-right: 2px; background: var(--brand); color: #fff; border-radius: 2px; }
.filter { display: flex; align-items: center; height: 38px; margin: 16px 15px 0; padding: 0 6px 0 12px; border: 1px solid var(--icon); color: var(--icon); }
.filter input { flex: 1; min-width: 0; padding: 0; border: 0; outline: 0; background: none; font: 18px/24px var(--arial); }
.filter input::placeholder { color: #9e9e9e; }
.crumbs { display: flex; align-items: center; height: 43px; padding: 0 17px 2px; gap: 5px; }
.crumbs svg { color: var(--icon); }
.crumbs .dots { padding: 0 8px; }
.listing { width: 100%; border-collapse: collapse; table-layout: fixed; }
.listing th, .listing td { height: 31px; padding: 1px 15px 0; text-align: right; white-space: nowrap; }
.listing th { border-top: 1px solid #e0e0e0; border-bottom: 1px solid var(--line); font-weight: 600; }
.listing th:first-child { width: 143px; border-right: 1px solid #e0e0e0; }
.listing td:first-child { padding: 0 0 0 5px; }
.sort { display: flex; align-items: center; justify-content: space-between; padding-right: 8px; }
.file { display: flex; align-items: center; gap: 6px; padding-left: 12px; position: relative; }
.file svg { color: #e65100; }
.file a { padding-top: 1px; }
.running::before { content: ""; position: absolute; left: 1px; top: 9px; width: 4px; height: 4px; border-radius: 50%; background: #388e3c; }
.selected { background: var(--brand); color: #fff; }
.selected .file svg { color: #fff; }
.selected .running::before { background: #fff; }

/* document area */
.dock { flex: 1; min-width: 0; display: flex; flex-direction: column; padding: 7px 9px 8px; background: var(--line); }
.doc-tabs { display: flex; flex: none; height: 32px; }
.doc-tab { width: 269px; display: flex; align-items: center; gap: 4px; padding: 0 8px 0 10px; border-right: 1px solid var(--line); border-bottom: 1px solid var(--line); border-top: 1px solid var(--line); background: #eee; color: #424242; }
.doc-tab svg { color: #e65100; }
.doc-tab a { flex: 1; min-width: 0; white-space: nowrap; }
.doc-tab button { margin-right: 4px; }
.doc-tab button svg { color: var(--icon); }
.doc-tab.current { padding-bottom: 2px; background: #fff; color: #212121; border-top: 3px solid var(--brand); border-bottom: 0; }
.dirty { flex: none; width: 12px; height: 12px; margin-right: 6px; border-radius: 50%; background: var(--icon); }
.doc-add { width: 31px; background: #eee; border: solid var(--line); border-width: 1px 0; color: var(--icon); }
.notebook { flex: 1; min-height: 0; display: flex; flex-direction: column; background: #fff; }
.nb-toolbar { display: flex; flex: none; align-items: center; height: 36px; padding: 0 8px 0 3px; border-bottom: 1px solid var(--line); box-shadow: 0 1px 2px #ddd; color: var(--icon); font: 16px/20px var(--arial); }
.nb-actions { display: grid; grid-template-columns: repeat(9, 1fr); width: 338px; }
.cell-type { display: flex; align-items: center; margin-left: 13px; color: #212121; }
.cell-type select { width: 82px; appearance: none; border: 0; padding: 0; outline: 0; background: none; color: inherit; font: inherit; }
.kernel { margin-left: auto; color: #424242; }
.kernel-status { width: 18px; height: 18px; margin-left: 14px; border: 1px solid var(--icon); border-radius: 50%; }
.nb-body { flex: 1; min-height: 0; display: flex; }
.cells { flex: 1; min-width: 0; padding: 38px 18px 0 19px; }
.markdown { padding-left: 97px; font-family: var(--ui); }
h1, h2, h3 { margin: 0; font-weight: 600; }
h1 { font-size: 34px; line-height: 48px; }
h2 { margin-top: 36px; font-size: 29px; line-height: 40px; font-weight: 700; }
h3 { margin-top: 20px; font-size: 24px; line-height: 32px; }
.cell { display: flex; height: 36px; margin-top: 20px; }
.collapser { width: 10px; border-radius: 2px; background: var(--brand); }
.prompt { width: 80px; padding-right: 8px; text-align: right; font: 15px/38px "DejaVu Sans Mono", monospace; color: #307fc1; }
.editor { flex: 1; display: flex; align-items: center; background: #f5f5f5; border: 1px solid #e0e0e0; }
.editor textarea { flex: 1; min-width: 0; height: 100%; padding: 6px; border: 0; outline: 0; resize: none; background: none; font: 15px/20px "DejaVu Sans Mono", monospace; }
.cell-tools { display: grid; grid-template-columns: repeat(6, 1fr); width: 225px; margin-right: 3px; color: var(--icon); }
.scrollbar { width: 19px; display: flex; flex-direction: column; align-items: center; padding: 10px 0 9px; background: #fcfcfc; }
.up, .down { border: 6px solid transparent; }
.up { border-top: 0; border-bottom: 9px solid #8b8b8b; }
.down { border-bottom: 0; border-top: 9px solid #8b8b8b; }
.track { flex: 1; width: 11px; padding: 9px 0 8px; }
.thumb { height: 77%; border-radius: 6px; background: #8b8b8b; }

/* status bar */
.status { display: flex; flex: none; align-items: center; height: 31px; padding: 0 23px 0 35px; white-space: nowrap; }
.simple { display: flex; align-items: center; gap: 4px; margin-right: 32px; font: 17px/20px var(--arial); }
.simple input { appearance: none; width: 44px; height: 20px; margin: 0; padding: 3px 4px; border-radius: 10px; background: var(--line); }
.simple input::before { content: ""; display: block; width: 14px; height: 14px; border-radius: 50%; background: #fff; }
.counts { display: flex; align-items: center; gap: 14px; margin-right: 23px; }
.mode { margin-left: auto; }
.shield { margin: 0 23px 0 25px; }
.pos { margin-right: 22px; }

/* edge sidebar */
.sidebar { flex: none; width: 55px; display: flex; flex-direction: column; align-items: center; padding: 2px 2px 2px 0; }
.sidebar button { width: 40px; height: 50px; }
.sidebar .add { margin-top: 4px; }
.rule { width: 36px; height: 1px; margin: auto 0 3px; background: #c0c0c0; }

/* taskbar */
.taskbar { flex: none; display: grid; grid-template-columns: 1fr auto 1fr; align-items: center; height: 60px; border-top: 1px solid #c9d6ea; background: linear-gradient(to right, #e3eff8 18%, #d4e4fb 23%, #d7dcf4 29%, #d3e4fb 37%, #d7dff6 47%, #d5dcf2 57%, #d4e3fa 63%, #d8def0 73%, #e2eef8 79%, #e2eef8); }
.widget { justify-self: start; padding-left: 26px; gap: 9px; font-size: 14px; }
.stock { position: relative; padding-top: 10px; }
.stock b { position: absolute; top: -8px; left: 14px; width: 20px; height: 20px; border-radius: 50%; background: #c42b1c; color: #fff; font-size: 13px; font-weight: 400; }
.quote { text-align: left; }
.quote em { display: block; font-style: normal; color: #107c10; }
.apps { display: flex; align-items: center; gap: 7px; }
.app { width: 48px; height: 48px; position: relative; border-radius: 5px; }
.open::after { content: ""; position: absolute; bottom: 0; left: 20px; width: 8px; height: 4px; border-radius: 2px; background: #7b7f8a; }
.app.active { background: #edf0fa; }
.app.active::after { left: 14px; width: 20px; background: #0078d4; }
.search { display: flex; align-items: center; width: 274px; height: 39px; padding-left: 13px; overflow: hidden; border: 1px solid #c3cde2; border-radius: 20px; background: #f3f7fe; }
.search input { flex: 1; min-width: 0; margin-left: 11px; padding: 0; border: 0; outline: 0; background: none; font: 16px/22px var(--ui); }
.search input::placeholder { color: #5a5d62; }
.pastry { align-self: flex-end; }
.tray { display: flex; align-items: center; justify-content: flex-end; padding-right: 24px; }
.tray button { width: 40px; height: 40px; }
.tray .quick { width: 100px; gap: 10px; }
.tray .clock { width: auto; margin-left: 8px; flex-direction: column; align-items: flex-end; font-size: 14px; color: #222; }
.tray .notif { width: 20px; height: 20px; margin-left: 9px; border-radius: 50%; background: #0078d4; color: #fff; font-size: 13px; }
```
